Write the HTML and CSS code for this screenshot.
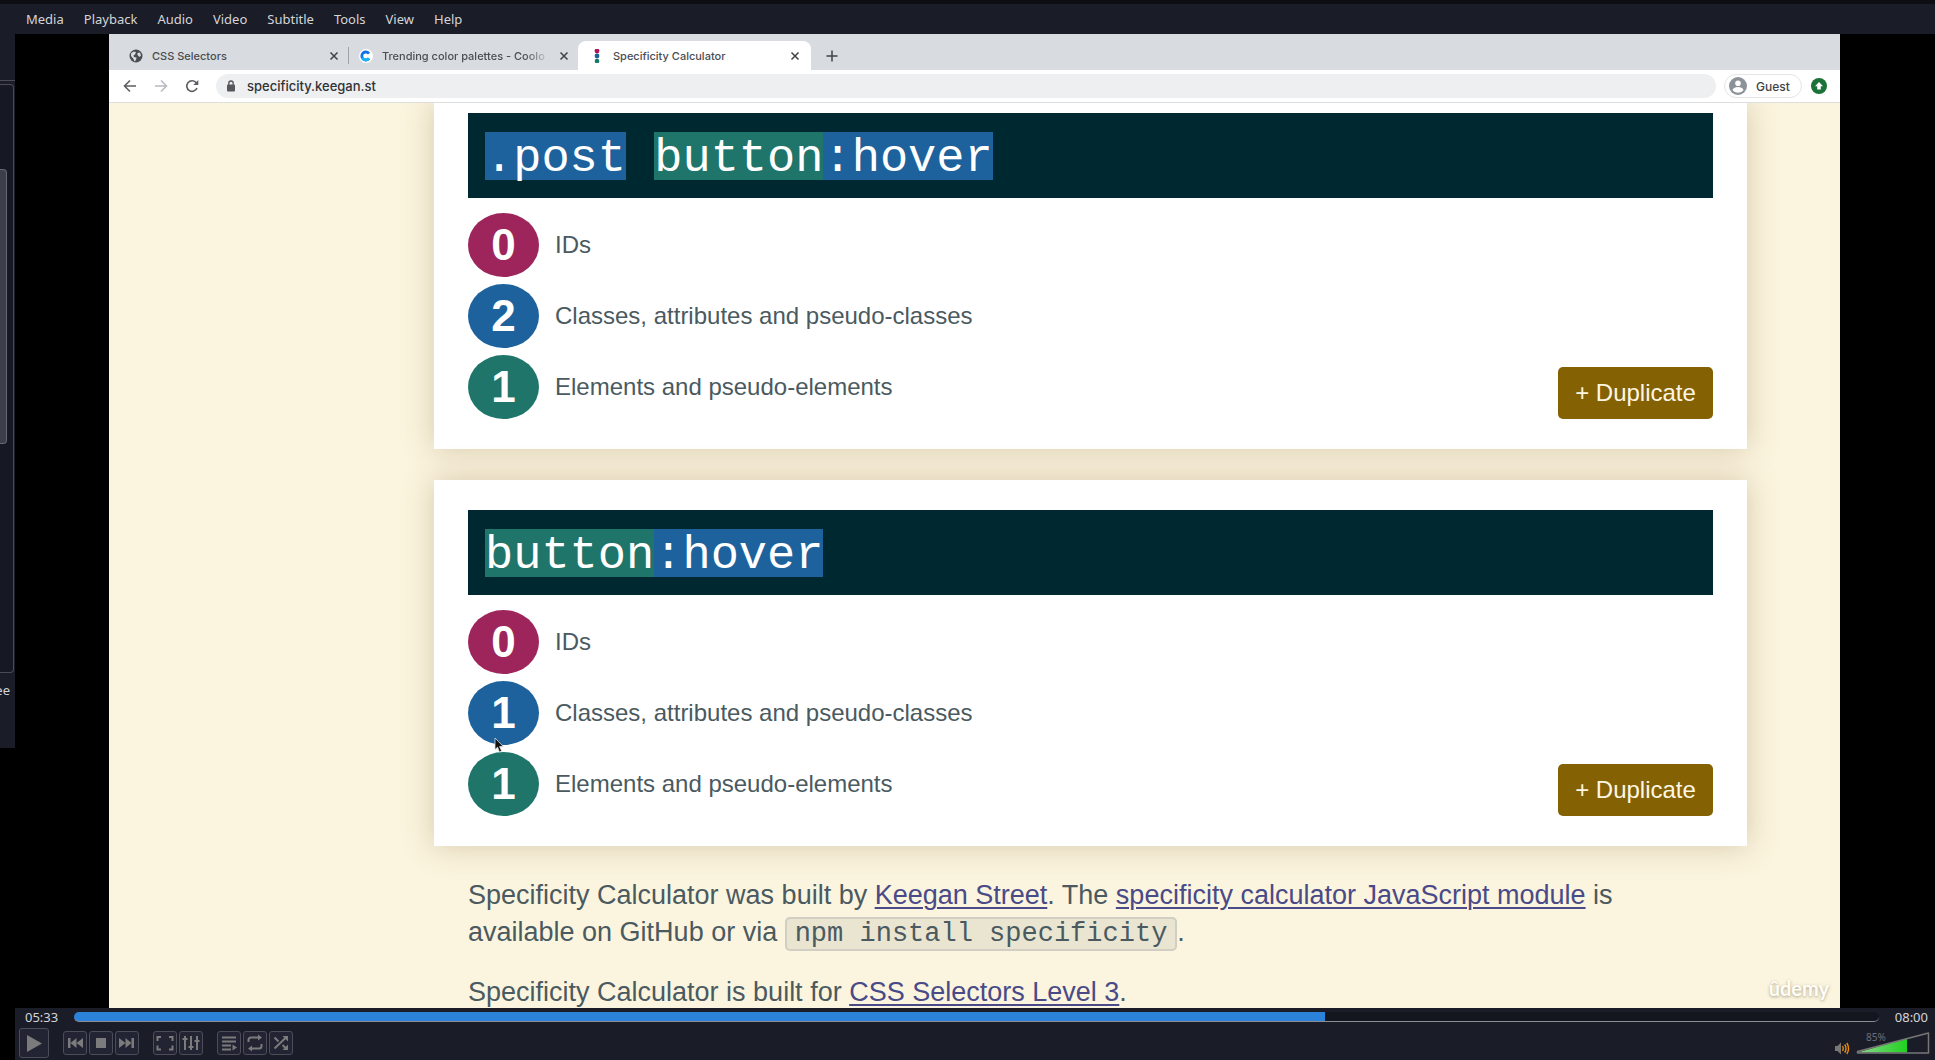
FILE: index.html
```html
<!DOCTYPE html>
<html lang="en">
<head>
<meta charset="utf-8">
<meta name="viewport" content="width=device-width, initial-scale=1">
<title>Media player</title>
<link rel="stylesheet" href="styles.css">
</head>
<body>
<div class="player">
  <nav class="menubar" aria-label="Player menu">
    <button class="menu-item">Media</button>
    <button class="menu-item">Playback</button>
    <button class="menu-item">Audio</button>
    <button class="menu-item">Video</button>
    <button class="menu-item">Subtitle</button>
    <button class="menu-item">Tools</button>
    <button class="menu-item">View</button>
    <button class="menu-item">Help</button>
  </nav>

  <div class="stage">
    <aside class="side">
      <div class="side-head"></div>
      <div class="side-list"><div class="side-thumb"></div></div>
      <div class="side-label">ee</div>
    </aside>

    <main class="video">
      <div class="tabs">
        <div class="tab tab-first">
          <svg class="favicon" viewBox="0 0 14 14"><circle cx="7" cy="7" r="6.5" fill="#4a4d51"/><path d="M2 4.5 4.500 2.500 7 3 6 5.500 4.500 6.500 5 8 7.500 8.500 7 11 5.500 12.500 4.500 10 2 7zM8.500 4 11 3.500 12 6.500 10.500 8 8.500 6z" fill="#d8dce0"/></svg>
          <span class="tab-title">CSS Selectors</span>
          <button class="tab-close" aria-label="Close tab"><svg viewBox="0 0 10 10"><path d="M1.500 1.500l7 7m0-7l-7 7"/></svg></button>
        </div>
        <div class="tab tab-second">
          <svg class="favicon" viewBox="0 0 14 14"><circle cx="7" cy="7" r="7" fill="#fff"/><path d="M10 4.600A4 4 0 1 0 10 9.400" fill="none" stroke="#1271e6" stroke-width="2.800"/><path d="M3.200 8.500A4 4 0 0 0 10 9.400" fill="none" stroke="#17b5f4" stroke-width="2.800"/></svg>
          <span class="tab-title tab-fade">Trending color palettes - Coolo</span>
          <button class="tab-close" aria-label="Close tab"><svg viewBox="0 0 10 10"><path d="M1.500 1.500l7 7m0-7l-7 7"/></svg></button>
        </div>
        <div class="tab tab-active">
          <svg class="favicon" viewBox="0 0 14 14"><circle cx="7" cy="2" r="2.400" fill="#b0125c"/><circle cx="7" cy="7" r="2.400" fill="#1d629c"/><circle cx="7" cy="12" r="2.300" fill="#16786a"/></svg>
          <span class="tab-title">Specificity Calculator</span>
          <button class="tab-close" aria-label="Close tab"><svg viewBox="0 0 10 10"><path d="M1.500 1.500l7 7m0-7l-7 7"/></svg></button>
        </div>
        <button class="tab-new" aria-label="New tab"><svg viewBox="0 0 12 12"><path d="M6 .5v11M.5 6h11"/></svg></button>
      </div>

      <div class="toolbar">
        <button class="nav-btn" aria-label="Back"><svg viewBox="0 0 14 14"><path d="M13 7H1.500M7 1.500L1.500 7 7 12.500"/></svg></button>
        <button class="nav-btn nav-off" aria-label="Forward"><svg viewBox="0 0 14 14"><path d="M1 7h11.500M7 1.500L12.500 7 7 12.500"/></svg></button>
        <button class="nav-btn" aria-label="Reload"><svg viewBox="0 0 14 14"><path d="M12 9A5.300 5.300 0 1 1 11 3.500L12 4.800"/><path d="M13.300 1v5H8.300z" fill="#5b5e62" stroke="none"/></svg></button>
        <label class="address">
          <svg class="lock" viewBox="0 0 10 12"><rect x="1" y="4.500" width="8" height="7" rx="1" fill="#54575b"/><path d="M2.800 5V3.200a2.200 2.200 0 0 1 4.400 0V5" fill="none" stroke="#54575b" stroke-width="1.300"/></svg>
          <input class="address-input" type="text" value="specificity.keegan.st" aria-label="Address">
        </label>
        <button class="guest"><svg class="avatar" viewBox="0 0 18 18"><circle cx="9" cy="9" r="9" fill="#8b9399"/><circle cx="9" cy="6.200" r="2.800" fill="#fff"/><path d="M3.500 13c1-4 10-4 11 0-2.500 3.600-8.500 3.600-11 0z" fill="#fff"/></svg>Guest</button>
        <button class="update" aria-label="Update"><svg viewBox="0 0 16 16"><circle cx="8" cy="8" r="8" fill="#1b7238"/><path d="M8 4l4 4.200H9.800V11.500H6.200V8.200H4z" fill="#fff"/></svg></button>
      </div>

      <div class="page">
        <section class="card card-cut">
          <div class="selector" role="textbox" aria-label="Selector"><span class="hl-class">.post</span> <span class="hl-type">button</span><span class="hl-class">:hover</span></div>
          <div class="result">
            <ul class="scores">
              <li class="score"><span class="count count-id">0</span>IDs</li>
              <li class="score"><span class="count count-class">2</span>Classes, attributes and pseudo-classes</li>
              <li class="score"><span class="count count-type">1</span>Elements and pseudo-elements</li>
            </ul>
            <button class="duplicate">+ Duplicate</button>
          </div>
        </section>
        <section class="card">
          <div class="selector" role="textbox" aria-label="Selector"><span class="hl-type">button</span><span class="hl-class">:hover</span></div>
          <div class="result">
            <ul class="scores">
              <li class="score"><span class="count count-id">0</span>IDs</li>
              <li class="score"><span class="count count-class">1<svg class="pointer" viewBox="0 0 10 16"><path d="M1 1v11.500l2.600-2.300 1.800 4.800 2.200-.9-2-4.600H9.300z" fill="#111" stroke="#ddd" stroke-width=".8"/></svg></span>Classes, attributes and pseudo-classes</li>
              <li class="score"><span class="count count-type">1</span>Elements and pseudo-elements</li>
            </ul>
            <button class="duplicate">+ Duplicate</button>
          </div>
        </section>
        <footer class="about">
          <p>Specificity Calculator was built by <a href="#">Keegan Street</a>. The <a href="#">specificity calculator JavaScript module</a> is available on GitHub or via <code>npm install specificity</code>.</p>
          <p>Specificity Calculator is built for <a href="#">CSS Selectors Level 3</a>.</p>
        </footer>
      </div>
      <div class="watermark">ûdemy</div>
    </main>
  </div>

  <div class="controls">
    <div class="seek">
      <span class="time">05:33</span>
      <input class="seek-bar" type="range" min="0" max="480" value="333" aria-label="Position" style="--played:69.3%">
      <span class="time">08:00</span>
    </div>
    <div class="buttons">
      <button class="ctl ctl-play" aria-label="Play"><svg viewBox="0 0 28 28"><path d="M7 6v17l15-8.500z"/></svg></button>
      <div class="group">
        <button class="ctl" aria-label="Previous"><svg viewBox="0 0 22 22"><path d="M4 6h2.500v10H4zM12.500 6v10l-6-5zM19 6v10l-6.500-5z"/></svg></button>
        <button class="ctl" aria-label="Stop"><svg viewBox="0 0 22 22"><path d="M6 6h10v10H6z"/></svg></button>
        <button class="ctl" aria-label="Next"><svg viewBox="0 0 22 22"><path d="M15.500 6H18v10h-2.500zM3 6v10l6.500-5zM9.500 6v10l6-5z"/></svg></button>
      </div>
      <div class="group">
        <button class="ctl" aria-label="Fullscreen"><svg class="line" viewBox="0 0 22 22"><path d="M7 5H3.500v4M3.500 13.500v4H7M15 5h3.500v4M18.500 13.500v4H15"/></svg></button>
        <button class="ctl" aria-label="Effects"><svg class="line" viewBox="0 0 22 22"><path d="M5 4v14M11 4v14M17 4v14"/><path d="M2.500 7h5M8.500 15h5M14.500 9h5" /></svg></button>
      </div>
      <div class="group">
        <button class="ctl" aria-label="Playlist"><svg class="line" viewBox="0 0 22 22"><path d="M4 5.500h14M4 9.500h14M4 13.500h9M4 17.500h9"/><path class="fill" d="M14.500 12.500v6l4.500-3z"/></svg></button>
        <button class="ctl" aria-label="Loop"><svg class="line" viewBox="0 0 22 22"><path d="M4.500 10V8q0-2.500 2.500-2.500h8M17.500 12v2q0 2.500-2.500 2.500H7"/><path class="fill" d="M14 2.500v6l4-3zM8 13.500v6l-4-3z"/></svg></button>
        <button class="ctl" aria-label="Random"><svg class="line" viewBox="0 0 22 22"><path d="M4.500 5.500l4 4M12.500 13l3.500 3.500M4.500 16.500L16 5.500"/><path class="fill" d="M12.500 4H18v5.500zM18 12.500V18h-5.500z"/></svg></button>
      </div>
      <div class="volume">
        <svg class="speaker" viewBox="0 0 15 13"><path d="M0 4h2.500L6 .5v12L2.500 9H0z" fill="#777"/><path d="M7.500 4q1.500 2.500 0 5M9.700 2.500q2.600 4 0 8M11.800 1q3.600 5.500 0 11" fill="none" stroke="#e8890c" stroke-width="1.400"/></svg>
        <label class="level">
          <svg class="wedge" viewBox="0 0 74 24"><defs><linearGradient id="vol"><stop offset="0" stop-color="#8fd68f"/><stop offset="1" stop-color="#1fd21f"/></linearGradient></defs><path d="M1.500 21.500L51 7.500v14z" fill="url(#vol)"/><path d="M1.500 20.500v1.500h71V2z" fill="none" stroke="#777" stroke-width="1.500" stroke-linejoin="round"/></svg>
          <span class="percent">85%</span>
          <input class="level-input" type="range" min="0" max="125" value="85" aria-label="Volume">
        </label>
      </div>
    </div>
  </div>
</div>
</body>
</html>
```

FILE: styles.css
```css
* { box-sizing: border-box; }

body {
  margin: 0;
  background: #000;
  font-family: "Noto Sans", sans-serif;
}

button {
  margin: 0;
  padding: 0;
  border: 0;
  background: none;
  color: inherit;
  font: inherit;
}

svg { display: block; }

.player {
  display: flex;
  flex-direction: column;
  height: 100vh;
}

/* menu bar */
.menubar {
  display: flex;
  gap: 20px;
  height: 34px;
  padding: 0 26px;
  border-top: 4px solid #0d0d14;
  background: #1a1c28;
  color: #d5d5d8;
  font-size: 13px;
}

/* stage */
.stage {
  display: flex;
  flex: 1;
  min-height: 0;
}

.side {
  display: flex;
  flex-direction: column;
  width: 15px;
  height: 714px;
  background: #1a1c28;
}

.side-head {
  height: 47px;
  border-bottom: 1px solid #4a4b57;
}

.side-list {
  height: 589px;
  margin: 3px 1px 0 0;
  padding: 84px 6px 0 0;
  border: 1px solid #4a4b57;
  border-left: 0;
  border-radius: 0 4px 4px 0;
  background: #161823;
}

.side-thumb {
  height: 275px;
  border: 1px solid #666873;
  border-left: 0;
  border-radius: 0 4px 4px 0;
  background: #3c3e4a;
}

.side-label {
  display: flex;
  justify-content: flex-end;
  padding: 8px 5px 0 0;
  color: #d5d5d8;
  font-size: 13px;
  line-height: 18px;
}

.video {
  position: relative;
  display: flex;
  flex: 1;
  flex-direction: column;
  min-width: 0;
  margin: 0 95px 0 94px;
  overflow: hidden;
  background: #fbf4de;
}

/* browser tabs */
.tabs {
  display: flex;
  align-items: flex-end;
  height: 36px;
  background: #d8dce0;
  color: #4a4d51;
  font-family: Inter, sans-serif;
  font-size: 11px;
  font-weight: 500;
}

.tab {
  display: flex;
  align-items: center;
  gap: 9px;
  height: 29px;
}

.tab-first {
  width: 240px;
  padding-left: 20px;
}

.tab-second {
  width: 229px;
  padding: 0 9px 0 10px;
}

.tab-first::after {
  width: 1px;
  height: 17px;
  background: #a1a5a9;
  content: "";
}

.tab-active {
  width: 233px;
  padding: 0 11px 0 12px;
  border-radius: 8px 8px 0 0;
  background: #fff;
}

.favicon {
  flex: none;
  width: 14px;
  height: 14px;
}

.tab-title {
  flex: 1;
  white-space: nowrap;
}

.tab-fade {
  mask-image: linear-gradient(90deg, #000 85%, transparent);
}

.tab-close svg {
  width: 10px;
  height: 10px;
  fill: none;
  stroke: #3f4246;
  stroke-width: 1.500;
}

.tab-new {
  display: flex;
  align-items: center;
  height: 29px;
  padding-left: 15px;
}

.tab-new svg {
  width: 12px;
  height: 12px;
  stroke: #3f4246;
  stroke-width: 1.500;
}

/* browser toolbar */
.toolbar {
  display: flex;
  align-items: center;
  height: 33px;
  padding: 0 13px 0 14px;
  border-bottom: 1px solid #dcdee0;
  background: #fff;
  color: #3f4246;
  font-family: Inter, sans-serif;
  font-size: 13px;
  font-weight: 500;
}

.nav-btn { margin-right: 17px; }

.nav-btn svg {
  width: 14px;
  height: 14px;
  fill: none;
  stroke: #5b5e62;
  stroke-width: 1.600;
}

.nav-off svg { stroke: #b9bbbe; }

.address {
  display: flex;
  flex: 1;
  align-items: center;
  gap: 11px;
  height: 24px;
  margin-right: 8px;
  padding: 0 10px;
  border-radius: 12px;
  background: #edeff1;
}

.lock {
  width: 10px;
  height: 12px;
}

.address-input {
  flex: 1;
  padding: 0;
  border: 0;
  outline: 0;
  background: none;
  color: #303236;
  font: inherit;
}

.guest {
  display: flex;
  align-items: center;
  gap: 9px;
  width: 78px;
  height: 24px;
  margin-right: 9px;
  padding-left: 4px;
  border: 1px solid #e3e5e7;
  border-radius: 12px;
  font-size: 12px;
}

.avatar {
  width: 18px;
  height: 18px;
}

.update svg {
  width: 16px;
  height: 16px;
}

/* page */
.page {
  flex: 1;
  min-height: 0;
  padding: 0 93px 0 325px;
  overflow: hidden;
  color: #4a5a60;
  font-family: "Liberation Sans", Arial, sans-serif;
}

.card {
  margin-bottom: 31px;
  padding: 30px 34px;
  background: #fff;
  box-shadow: 0 0 28px rgba(150, 120, 80, 0.35);
}

.card-cut { padding-top: 10px; }

.selector {
  height: 85px;
  padding: 19px 17px;
  background: #002830;
  color: #fff;
  font-family: "Liberation Mono", "Courier New", monospace;
  font-size: 47px;
  line-height: 48px;
  white-space: pre;
}

.hl-class,
.hl-type {
  display: inline-block;
  height: 48px;
  padding-top: 3px;
  vertical-align: top;
}

.hl-class { background: #1d629c; }
.hl-type { background: #20756b; }

.result {
  display: flex;
  align-items: flex-end;
  justify-content: space-between;
  padding-top: 15px;
}

.scores {
  display: grid;
  gap: 7px;
  margin: 0;
  padding: 0;
  list-style: none;
}

.score {
  display: flex;
  align-items: center;
  gap: 16px;
  font-size: 24px;
}

.count {
  position: relative;
  display: flex;
  align-items: center;
  justify-content: center;
  width: 71px;
  height: 64px;
  border-radius: 50%;
  color: #fff;
  font-size: 44px;
  font-weight: 700;
}

.count-id { background: #9d255b; }
.count-class { background: #1d629c; }
.count-type { background: #20756b; }

.pointer {
  position: absolute;
  z-index: 1;
  top: 56px;
  left: 26px;
  width: 10px;
  height: 16px;
}

.duplicate {
  width: 155px;
  height: 52px;
  border-radius: 5px;
  background: #846204;
  color: #fdf6e3;
  font-size: 24px;
}

.about {
  padding: 0 34px;
  font-size: 27px;
  line-height: 37px;
}

.about p { margin: 0 0 23px; }

.about a {
  color: #494a87;
  text-decoration-thickness: 2px;
  text-underline-offset: 3px;
}

.about code {
  padding: 0 8px;
  border: 2px solid #d1cfc3;
  border-radius: 5px;
  background: #e9e5d1;
  font-family: "Liberation Mono", "Courier New", monospace;
  font-size: 27px;
  line-height: 30px;
}

.watermark {
  position: absolute;
  right: 11px;
  bottom: 7px;
  color: #fffdf5;
  font-family: Lato, sans-serif;
  font-size: 20px;
  font-weight: 700;
  line-height: 26px;
  text-shadow: 0 1px 3px rgba(90, 80, 50, 0.5);
}

/* player controls */
.controls {
  height: 52px;
  margin-left: 15px;
  background: #1a1c28;
  color: #d5d5d8;
}

.seek {
  display: flex;
  align-items: center;
  gap: 16px;
  height: 18px;
  padding: 0 7px 0 10px;
  font-size: 13px;
}

.seek-bar {
  flex: 1;
  height: 10px;
  margin: 0;
  border-bottom: 1px solid #8c8d95;
  border-radius: 5px;
  appearance: none;
  background: linear-gradient(90deg, #2a82da var(--played), #13151f var(--played));
}

.seek-bar::-webkit-slider-thumb {
  width: 1px;
  height: 8px;
  appearance: none;
  opacity: 0;
}

.buttons {
  display: flex;
  align-items: center;
  gap: 14px;
  height: 34px;
  padding: 0 5px 0 4px;
}

.group {
  display: flex;
  gap: 2px;
}

.ctl {
  width: 24px;
  height: 24px;
  border: 1px solid #4b4d5b;
  border-radius: 3px;
  background: #222434;
}

.ctl-play {
  width: 30px;
  height: 30px;
}

.ctl svg {
  width: 100%;
  height: 100%;
  fill: #7b7b7b;
}

.ctl .line {
  fill: none;
  stroke: #7b7b7b;
  stroke-width: 2;
}

.ctl .fill {
  fill: #7b7b7b;
  stroke: none;
}

.volume {
  display: flex;
  align-items: flex-end;
  gap: 6px;
  margin-left: auto;
}

.speaker {
  width: 15px;
  height: 13px;
}

.level {
  position: relative;
  width: 74px;
  height: 24px;
}

.wedge {
  width: 74px;
  height: 24px;
}

.percent {
  position: absolute;
  top: 0;
  left: 10px;
  color: #6d6f7a;
  font-size: 10px;
  line-height: 12px;
}

.level-input {
  position: absolute;
  inset: 0;
  width: 100%;
  margin: 0;
  opacity: 0;
}
```
